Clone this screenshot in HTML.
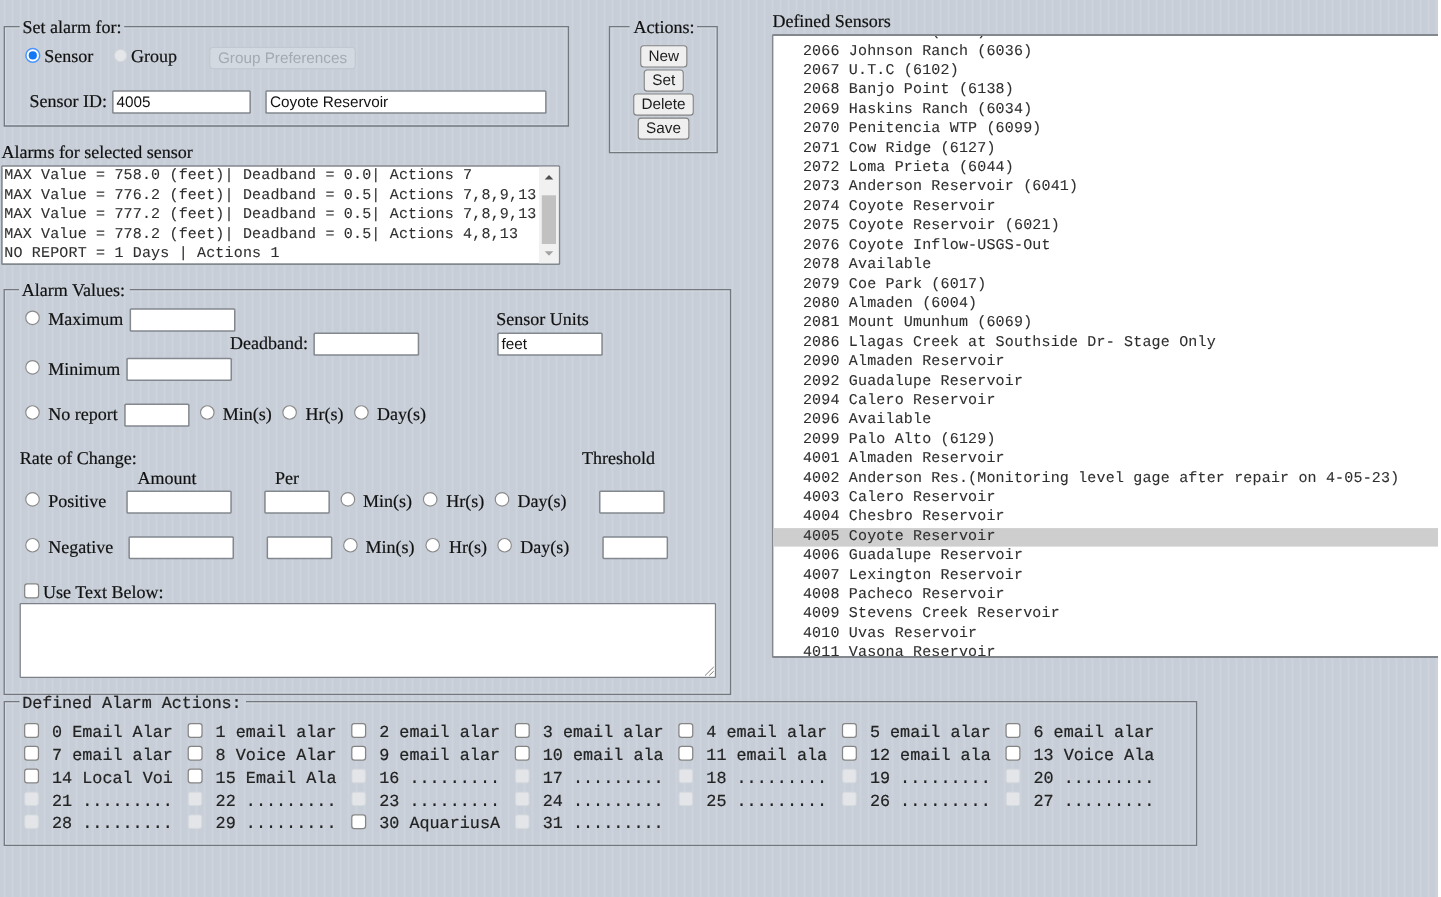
<!DOCTYPE html>
<html lang="en"><head><meta charset="utf-8"><title>Alarm Setup</title>
<style>
html,body{margin:0;padding:0}
body{width:1441px;height:897px;overflow:hidden;position:relative;
 background-color:#c7ced7;
 background-image:repeating-linear-gradient(90deg,#c7ced7 0px,#c7ced7 3px,#ccd3dc 4px,#ccd3dc 5px,#c7ced7 6px,#c7ced7 8px);}
#g{position:absolute;left:0;top:0}
.t{position:absolute;white-space:pre;line-height:1;color:#111;text-rendering:geometricPrecision}
.serif{font-family:"Liberation Serif",serif;font-size:18px;-webkit-text-stroke:0.2px #111}
.sans{font-family:"Liberation Sans",sans-serif;font-size:15.3px}
.mono{font-family:"Liberation Mono",monospace;font-size:15px;letter-spacing:0.175px;-webkit-text-stroke:0.1px #2e2e2e}
.monob{font-family:"Liberation Mono",monospace;font-size:16.8px;-webkit-text-stroke:0.2px #222}
#tx{position:absolute;left:0;top:0;width:1441px;height:897px;will-change:transform}
#lb{position:absolute;overflow:hidden;will-change:transform}
#strip{position:absolute;left:1438px;top:0;width:3px;height:897px;background:#fff}
</style></head>
<body>
<svg id="g" width="1441" height="897" viewBox="0 0 1441 897">
<path d="M19.60 27.95H5.55V124.75H567.15V27.95H124.20" fill="none" stroke="#fff" stroke-opacity="0.22" stroke-width="1.2"/>
<path d="M19.60 26.70H4.30V126.00H568.40V26.70H124.20" fill="none" stroke="#747980" stroke-width="1.3"/>
<circle cx="32.80" cy="55.40" r="6.9" fill="#fff" stroke="#4a95fb" stroke-width="1.5"/>
<circle cx="32.80" cy="55.40" r="4.1" fill="#1177f6"/>
<circle cx="120.60" cy="55.60" r="6.15" fill="#e4e6e9" stroke="#d3d7dc" stroke-width="1"/>
<rect x="209.90" y="47.40" width="145.30" height="21.30" rx="3" fill="#d3d9e0" stroke="#c0c6ce" stroke-width="1"/>
<rect x="112.10" y="90.30" width="138.80" height="23.50" rx="1.6" fill="#83888e"/>
<rect x="113.60" y="91.80" width="135.80" height="20.50" rx="0.55" fill="#fff"/>
<rect x="265.30" y="90.30" width="281.30" height="23.50" rx="1.6" fill="#83888e"/>
<rect x="266.80" y="91.80" width="278.30" height="20.50" rx="0.55" fill="#fff"/>
<path d="M629.60 27.95H610.75V151.35H715.95V27.95H697.00" fill="none" stroke="#fff" stroke-opacity="0.22" stroke-width="1.2"/>
<path d="M629.60 26.70H609.50V152.60H717.20V26.70H697.00" fill="none" stroke="#747980" stroke-width="1.3"/>
<rect x="640.75" y="45.75" width="46.10" height="21.30" rx="3" fill="#efefef" stroke="#828282" stroke-width="1.1"/>
<rect x="644.25" y="70.05" width="39.00" height="21.10" rx="3" fill="#efefef" stroke="#828282" stroke-width="1.1"/>
<rect x="633.75" y="93.95" width="59.50" height="21.20" rx="3" fill="#efefef" stroke="#828282" stroke-width="1.1"/>
<rect x="638.25" y="118.15" width="50.60" height="21.00" rx="3" fill="#efefef" stroke="#828282" stroke-width="1.1"/>
<rect x="1.10" y="165.20" width="559.10" height="99.70" rx="1.5" fill="#83888e"/>
<rect x="2.70" y="166.80" width="555.90" height="96.50" rx="0.38" fill="#fff"/>
<rect x="538.9" y="166.8" width="19.7" height="96.5" fill="#f1f1f1"/>
<rect x="541.8" y="195.3" width="14.2" height="48.7" fill="#c1c1c1"/>
<path d="M544.7 179.4L549.0 174.9L553.3 179.4Z" fill="#505050"/>
<path d="M544.7 251.2L549.0 255.7L553.3 251.2Z" fill="#a3a3a3"/>
<path d="M19.00 290.85H5.45V693.05H729.25V290.85H129.80" fill="none" stroke="#fff" stroke-opacity="0.22" stroke-width="1.2"/>
<path d="M19.00 289.60H4.20V694.30H730.50V289.60H129.80" fill="none" stroke="#747980" stroke-width="1.3"/>
<circle cx="32.50" cy="317.80" r="6.75" fill="#fff" stroke="#8a8a8a" stroke-width="1.15"/>
<rect x="129.60" y="308.20" width="105.90" height="23.60" rx="1.6" fill="#83888e"/>
<rect x="131.10" y="309.70" width="102.90" height="20.60" rx="0.55" fill="#fff"/>
<rect x="313.40" y="332.60" width="105.80" height="23.20" rx="1.6" fill="#83888e"/>
<rect x="314.90" y="334.10" width="102.80" height="20.20" rx="0.55" fill="#fff"/>
<rect x="497.20" y="332.60" width="105.60" height="23.20" rx="1.6" fill="#83888e"/>
<rect x="498.70" y="334.10" width="102.60" height="20.20" rx="0.55" fill="#fff"/>
<circle cx="32.50" cy="367.30" r="6.75" fill="#fff" stroke="#8a8a8a" stroke-width="1.15"/>
<rect x="126.30" y="357.70" width="105.70" height="23.30" rx="1.6" fill="#83888e"/>
<rect x="127.80" y="359.20" width="102.70" height="20.30" rx="0.55" fill="#fff"/>
<circle cx="32.50" cy="412.50" r="6.75" fill="#fff" stroke="#8a8a8a" stroke-width="1.15"/>
<rect x="124.20" y="403.60" width="65.40" height="23.20" rx="1.6" fill="#83888e"/>
<rect x="125.70" y="405.10" width="62.40" height="20.20" rx="0.55" fill="#fff"/>
<circle cx="207.30" cy="412.50" r="6.75" fill="#fff" stroke="#8a8a8a" stroke-width="1.15"/>
<circle cx="289.60" cy="412.50" r="6.75" fill="#fff" stroke="#8a8a8a" stroke-width="1.15"/>
<circle cx="361.40" cy="412.50" r="6.75" fill="#fff" stroke="#8a8a8a" stroke-width="1.15"/>
<circle cx="32.50" cy="499.40" r="6.75" fill="#fff" stroke="#8a8a8a" stroke-width="1.15"/>
<rect x="126.30" y="490.50" width="105.50" height="23.20" rx="1.6" fill="#83888e"/>
<rect x="127.80" y="492.00" width="102.50" height="20.20" rx="0.55" fill="#fff"/>
<rect x="264.20" y="490.50" width="65.70" height="23.20" rx="1.6" fill="#83888e"/>
<rect x="265.70" y="492.00" width="62.70" height="20.20" rx="0.55" fill="#fff"/>
<circle cx="347.90" cy="499.40" r="6.75" fill="#fff" stroke="#8a8a8a" stroke-width="1.15"/>
<circle cx="430.20" cy="499.40" r="6.75" fill="#fff" stroke="#8a8a8a" stroke-width="1.15"/>
<circle cx="502.00" cy="499.40" r="6.75" fill="#fff" stroke="#8a8a8a" stroke-width="1.15"/>
<rect x="599.00" y="490.50" width="65.80" height="23.20" rx="1.6" fill="#83888e"/>
<rect x="600.50" y="492.00" width="62.80" height="20.20" rx="0.55" fill="#fff"/>
<circle cx="32.50" cy="545.25" r="6.75" fill="#fff" stroke="#8a8a8a" stroke-width="1.15"/>
<rect x="128.40" y="536.30" width="105.60" height="22.90" rx="1.6" fill="#83888e"/>
<rect x="129.90" y="537.80" width="102.60" height="19.90" rx="0.55" fill="#fff"/>
<rect x="266.60" y="536.30" width="65.80" height="22.90" rx="1.6" fill="#83888e"/>
<rect x="268.10" y="537.80" width="62.80" height="19.90" rx="0.55" fill="#fff"/>
<circle cx="350.40" cy="545.25" r="6.75" fill="#fff" stroke="#8a8a8a" stroke-width="1.15"/>
<circle cx="432.70" cy="545.25" r="6.75" fill="#fff" stroke="#8a8a8a" stroke-width="1.15"/>
<circle cx="504.60" cy="545.25" r="6.75" fill="#fff" stroke="#8a8a8a" stroke-width="1.15"/>
<rect x="602.30" y="536.30" width="65.80" height="22.90" rx="1.6" fill="#83888e"/>
<rect x="603.80" y="537.80" width="62.80" height="19.90" rx="0.55" fill="#fff"/>
<rect x="24.67" y="583.85" width="13.90" height="13.90" rx="2.6" fill="#fff" stroke="#858585" stroke-width="1.25"/>
<rect x="19.60" y="603.00" width="696.50" height="75.00" rx="1.2" fill="#7d8187"/>
<rect x="20.85" y="604.25" width="694.00" height="72.50" rx="0.32" fill="#fff"/>
<path d="M705.0 675.6L713.8 666.9M709.3 675.5L713.8 671.1" stroke="#808080" stroke-width="1" fill="none"/>
<path d="M19.50 702.85H5.55V844.15H1195.30V702.85H246.00" fill="none" stroke="#fff" stroke-opacity="0.22" stroke-width="1.2"/>
<path d="M19.50 701.60H4.30V845.40H1196.55V701.60H246.00" fill="none" stroke="#747980" stroke-width="1.3"/>
<rect x="24.65" y="723.50" width="13.80" height="13.80" rx="2.6" fill="#fff" stroke="#858585" stroke-width="1.25"/>
<rect x="188.22" y="723.50" width="13.80" height="13.80" rx="2.6" fill="#fff" stroke="#858585" stroke-width="1.25"/>
<rect x="351.79" y="723.50" width="13.80" height="13.80" rx="2.6" fill="#fff" stroke="#858585" stroke-width="1.25"/>
<rect x="515.36" y="723.50" width="13.80" height="13.80" rx="2.6" fill="#fff" stroke="#858585" stroke-width="1.25"/>
<rect x="678.93" y="723.50" width="13.80" height="13.80" rx="2.6" fill="#fff" stroke="#858585" stroke-width="1.25"/>
<rect x="842.50" y="723.50" width="13.80" height="13.80" rx="2.6" fill="#fff" stroke="#858585" stroke-width="1.25"/>
<rect x="1006.07" y="723.50" width="13.80" height="13.80" rx="2.6" fill="#fff" stroke="#858585" stroke-width="1.25"/>
<rect x="24.65" y="746.32" width="13.80" height="13.80" rx="2.6" fill="#fff" stroke="#858585" stroke-width="1.25"/>
<rect x="188.22" y="746.32" width="13.80" height="13.80" rx="2.6" fill="#fff" stroke="#858585" stroke-width="1.25"/>
<rect x="351.79" y="746.32" width="13.80" height="13.80" rx="2.6" fill="#fff" stroke="#858585" stroke-width="1.25"/>
<rect x="515.36" y="746.32" width="13.80" height="13.80" rx="2.6" fill="#fff" stroke="#858585" stroke-width="1.25"/>
<rect x="678.93" y="746.32" width="13.80" height="13.80" rx="2.6" fill="#fff" stroke="#858585" stroke-width="1.25"/>
<rect x="842.50" y="746.32" width="13.80" height="13.80" rx="2.6" fill="#fff" stroke="#858585" stroke-width="1.25"/>
<rect x="1006.07" y="746.32" width="13.80" height="13.80" rx="2.6" fill="#fff" stroke="#858585" stroke-width="1.25"/>
<rect x="24.65" y="769.14" width="13.80" height="13.80" rx="2.6" fill="#fff" stroke="#858585" stroke-width="1.25"/>
<rect x="188.22" y="769.14" width="13.80" height="13.80" rx="2.6" fill="#fff" stroke="#858585" stroke-width="1.25"/>
<rect x="351.99" y="769.34" width="13.40" height="13.40" rx="2" fill="#e3e5e8" stroke="#d6dadf" stroke-width="1"/>
<rect x="515.56" y="769.34" width="13.40" height="13.40" rx="2" fill="#e3e5e8" stroke="#d6dadf" stroke-width="1"/>
<rect x="679.13" y="769.34" width="13.40" height="13.40" rx="2" fill="#e3e5e8" stroke="#d6dadf" stroke-width="1"/>
<rect x="842.70" y="769.34" width="13.40" height="13.40" rx="2" fill="#e3e5e8" stroke="#d6dadf" stroke-width="1"/>
<rect x="1006.27" y="769.34" width="13.40" height="13.40" rx="2" fill="#e3e5e8" stroke="#d6dadf" stroke-width="1"/>
<rect x="24.85" y="792.16" width="13.40" height="13.40" rx="2" fill="#e3e5e8" stroke="#d6dadf" stroke-width="1"/>
<rect x="188.42" y="792.16" width="13.40" height="13.40" rx="2" fill="#e3e5e8" stroke="#d6dadf" stroke-width="1"/>
<rect x="351.99" y="792.16" width="13.40" height="13.40" rx="2" fill="#e3e5e8" stroke="#d6dadf" stroke-width="1"/>
<rect x="515.56" y="792.16" width="13.40" height="13.40" rx="2" fill="#e3e5e8" stroke="#d6dadf" stroke-width="1"/>
<rect x="679.13" y="792.16" width="13.40" height="13.40" rx="2" fill="#e3e5e8" stroke="#d6dadf" stroke-width="1"/>
<rect x="842.70" y="792.16" width="13.40" height="13.40" rx="2" fill="#e3e5e8" stroke="#d6dadf" stroke-width="1"/>
<rect x="1006.27" y="792.16" width="13.40" height="13.40" rx="2" fill="#e3e5e8" stroke="#d6dadf" stroke-width="1"/>
<rect x="24.85" y="814.98" width="13.40" height="13.40" rx="2" fill="#e3e5e8" stroke="#d6dadf" stroke-width="1"/>
<rect x="188.42" y="814.98" width="13.40" height="13.40" rx="2" fill="#e3e5e8" stroke="#d6dadf" stroke-width="1"/>
<rect x="351.79" y="814.78" width="13.80" height="13.80" rx="2.6" fill="#fff" stroke="#858585" stroke-width="1.25"/>
<rect x="515.56" y="814.98" width="13.40" height="13.40" rx="2" fill="#e3e5e8" stroke="#d6dadf" stroke-width="1"/>
<rect x="771.9" y="34.0" width="700" height="623.9" rx="1.5" fill="#83888e"/>
<rect x="773.4" y="35.9" width="700" height="620.1" rx="0.5" fill="#fff"/>
<rect x="773.4" y="528.10" width="700" height="18.5" fill="#cecece"/>
</svg>
<div id="tx">
<span class="t serif" style="left:22.60px;top:18.00px;">Set alarm for:</span>
<span class="t serif" style="left:44.30px;top:47.00px;">Sensor</span>
<span class="t serif" style="left:131.00px;top:47.00px;">Group</span>
<span class="t sans" style="left:209.40px;width:146.30px;text-align:center;top:51px;color:#a3aab3">Group Preferences</span>
<span class="t serif" style="left:29.60px;top:92.00px;">Sensor ID:</span>
<span class="t sans" style="left:116.60px;top:95.00px;">4005</span>
<span class="t sans" style="left:270.00px;top:95.00px;">Coyote Reservoir</span>
<span class="t serif" style="left:633.40px;top:18.00px;">Actions:</span>
<span class="t sans" style="left:640.20px;width:47.20px;text-align:center;top:49px;color:#1c1c1c">New</span>
<span class="t sans" style="left:643.70px;width:40.10px;text-align:center;top:73px;color:#1c1c1c">Set</span>
<span class="t sans" style="left:633.20px;width:60.60px;text-align:center;top:97px;color:#1c1c1c">Delete</span>
<span class="t sans" style="left:637.70px;width:51.70px;text-align:center;top:121px;color:#1c1c1c">Save</span>
<span class="t serif" style="left:1.40px;top:143.00px;">Alarms for selected sensor</span>
<span class="t mono" style="left:4.30px;top:168.00px;color:#2e2e2e;">MAX Value = 758.0 (feet)| Deadband = 0.0| Actions 7</span>
<span class="t mono" style="left:4.30px;top:188.00px;color:#2e2e2e;">MAX Value = 776.2 (feet)| Deadband = 0.5| Actions 7,8,9,13</span>
<span class="t mono" style="left:4.30px;top:207.00px;color:#2e2e2e;">MAX Value = 777.2 (feet)| Deadband = 0.5| Actions 7,8,9,13</span>
<span class="t mono" style="left:4.30px;top:227.00px;color:#2e2e2e;">MAX Value = 778.2 (feet)| Deadband = 0.5| Actions 4,8,13</span>
<span class="t mono" style="left:4.30px;top:246.00px;color:#2e2e2e;">NO REPORT = 1 Days | Actions 1</span>
<span class="t serif" style="left:21.80px;top:281.00px;">Alarm Values:</span>
<span class="t serif" style="left:48.30px;top:310.00px;">Maximum</span>
<span class="t serif" style="left:230.00px;top:334.00px;">Deadband:</span>
<span class="t serif" style="left:496.20px;top:310.00px;">Sensor Units</span>
<span class="t sans" style="left:501.60px;top:337.00px;">feet</span>
<span class="t serif" style="left:48.30px;top:360.00px;">Minimum</span>
<span class="t serif" style="left:48.30px;top:405.00px;">No report</span>
<span class="t serif" style="left:222.80px;top:405.00px;">Min(s)</span>
<span class="t serif" style="left:305.50px;top:405.00px;">Hr(s)</span>
<span class="t serif" style="left:377.00px;top:405.00px;">Day(s)</span>
<span class="t serif" style="left:19.80px;top:449.00px;">Rate of Change:</span>
<span class="t serif" style="left:582.00px;top:449.00px;">Threshold</span>
<span class="t serif" style="left:137.40px;top:469.00px;">Amount</span>
<span class="t serif" style="left:274.90px;top:469.00px;">Per</span>
<span class="t serif" style="left:48.30px;top:492.00px;">Positive</span>
<span class="t serif" style="left:363.10px;top:492.00px;">Min(s)</span>
<span class="t serif" style="left:446.30px;top:492.00px;">Hr(s)</span>
<span class="t serif" style="left:517.60px;top:492.00px;">Day(s)</span>
<span class="t serif" style="left:48.30px;top:538.00px;">Negative</span>
<span class="t serif" style="left:365.60px;top:538.00px;">Min(s)</span>
<span class="t serif" style="left:448.90px;top:538.00px;">Hr(s)</span>
<span class="t serif" style="left:520.20px;top:538.00px;">Day(s)</span>
<span class="t serif" style="left:43.10px;top:583.00px;">Use Text Below:</span>
<span class="t monob" style="left:22.20px;top:697.00px;color:#222;letter-spacing:-0.1px;">Defined Alarm Actions:</span>
<span class="t monob" style="left:52.05px;top:726.00px;color:#222;">0 Email Alar</span>
<span class="t monob" style="left:215.62px;top:726.00px;color:#222;">1 email alar</span>
<span class="t monob" style="left:379.19px;top:726.00px;color:#222;">2 email alar</span>
<span class="t monob" style="left:542.76px;top:726.00px;color:#222;">3 email alar</span>
<span class="t monob" style="left:706.33px;top:726.00px;color:#222;">4 email alar</span>
<span class="t monob" style="left:869.90px;top:726.00px;color:#222;">5 email alar</span>
<span class="t monob" style="left:1033.47px;top:726.00px;color:#222;">6 email alar</span>
<span class="t monob" style="left:52.05px;top:749.00px;color:#222;">7 email alar</span>
<span class="t monob" style="left:215.62px;top:749.00px;color:#222;">8 Voice Alar</span>
<span class="t monob" style="left:379.19px;top:749.00px;color:#222;">9 email alar</span>
<span class="t monob" style="left:542.76px;top:749.00px;color:#222;">10 email ala</span>
<span class="t monob" style="left:706.33px;top:749.00px;color:#222;">11 email ala</span>
<span class="t monob" style="left:869.90px;top:749.00px;color:#222;">12 email ala</span>
<span class="t monob" style="left:1033.47px;top:749.00px;color:#222;">13 Voice Ala</span>
<span class="t monob" style="left:52.05px;top:772.00px;color:#222;">14 Local Voi</span>
<span class="t monob" style="left:215.62px;top:772.00px;color:#222;">15 Email Ala</span>
<span class="t monob" style="left:379.19px;top:772.00px;color:#222;">16 .........</span>
<span class="t monob" style="left:542.76px;top:772.00px;color:#222;">17 .........</span>
<span class="t monob" style="left:706.33px;top:772.00px;color:#222;">18 .........</span>
<span class="t monob" style="left:869.90px;top:772.00px;color:#222;">19 .........</span>
<span class="t monob" style="left:1033.47px;top:772.00px;color:#222;">20 .........</span>
<span class="t monob" style="left:52.05px;top:795.00px;color:#222;">21 .........</span>
<span class="t monob" style="left:215.62px;top:795.00px;color:#222;">22 .........</span>
<span class="t monob" style="left:379.19px;top:795.00px;color:#222;">23 .........</span>
<span class="t monob" style="left:542.76px;top:795.00px;color:#222;">24 .........</span>
<span class="t monob" style="left:706.33px;top:795.00px;color:#222;">25 .........</span>
<span class="t monob" style="left:869.90px;top:795.00px;color:#222;">26 .........</span>
<span class="t monob" style="left:1033.47px;top:795.00px;color:#222;">27 .........</span>
<span class="t monob" style="left:52.05px;top:817.00px;color:#222;">28 .........</span>
<span class="t monob" style="left:215.62px;top:817.00px;color:#222;">29 .........</span>
<span class="t monob" style="left:379.19px;top:817.00px;color:#222;">30 AquariusA</span>
<span class="t monob" style="left:542.76px;top:817.00px;color:#222;">31 .........</span>
<span class="t serif" style="left:772.40px;top:12.00px;">Defined Sensors</span>
</div>
<div id="lb" style="left:773px;top:36px;width:665px;height:620px">
<span class="t mono" style="left:29.90px;top:-12px;color:#2e2e2e">2065 Calabaza (6018)</span>
<span class="t mono" style="left:29.90px;top:8px;color:#2e2e2e">2066 Johnson Ranch (6036)</span>
<span class="t mono" style="left:29.90px;top:27px;color:#2e2e2e">2067 U.T.C (6102)</span>
<span class="t mono" style="left:29.90px;top:46px;color:#2e2e2e">2068 Banjo Point (6138)</span>
<span class="t mono" style="left:29.90px;top:66px;color:#2e2e2e">2069 Haskins Ranch (6034)</span>
<span class="t mono" style="left:29.90px;top:85px;color:#2e2e2e">2070 Penitencia WTP (6099)</span>
<span class="t mono" style="left:29.90px;top:105px;color:#2e2e2e">2071 Cow Ridge (6127)</span>
<span class="t mono" style="left:29.90px;top:124px;color:#2e2e2e">2072 Loma Prieta (6044)</span>
<span class="t mono" style="left:29.90px;top:143px;color:#2e2e2e">2073 Anderson Reservoir (6041)</span>
<span class="t mono" style="left:29.90px;top:163px;color:#2e2e2e">2074 Coyote Reservoir</span>
<span class="t mono" style="left:29.90px;top:182px;color:#2e2e2e">2075 Coyote Reservoir (6021)</span>
<span class="t mono" style="left:29.90px;top:202px;color:#2e2e2e">2076 Coyote Inflow-USGS-Out</span>
<span class="t mono" style="left:29.90px;top:221px;color:#2e2e2e">2078 Available</span>
<span class="t mono" style="left:29.90px;top:241px;color:#2e2e2e">2079 Coe Park (6017)</span>
<span class="t mono" style="left:29.90px;top:260px;color:#2e2e2e">2080 Almaden (6004)</span>
<span class="t mono" style="left:29.90px;top:279px;color:#2e2e2e">2081 Mount Umunhum (6069)</span>
<span class="t mono" style="left:29.90px;top:299px;color:#2e2e2e">2086 Llagas Creek at Southside Dr- Stage Only</span>
<span class="t mono" style="left:29.90px;top:318px;color:#2e2e2e">2090 Almaden Reservoir</span>
<span class="t mono" style="left:29.90px;top:338px;color:#2e2e2e">2092 Guadalupe Reservoir</span>
<span class="t mono" style="left:29.90px;top:357px;color:#2e2e2e">2094 Calero Reservoir</span>
<span class="t mono" style="left:29.90px;top:376px;color:#2e2e2e">2096 Available</span>
<span class="t mono" style="left:29.90px;top:396px;color:#2e2e2e">2099 Palo Alto (6129)</span>
<span class="t mono" style="left:29.90px;top:415px;color:#2e2e2e">4001 Almaden Reservoir</span>
<span class="t mono" style="left:29.90px;top:435px;color:#2e2e2e">4002 Anderson Res.(Monitoring level gage after repair on 4-05-23)</span>
<span class="t mono" style="left:29.90px;top:454px;color:#2e2e2e">4003 Calero Reservoir</span>
<span class="t mono" style="left:29.90px;top:473px;color:#2e2e2e">4004 Chesbro Reservoir</span>
<span class="t mono" style="left:29.90px;top:493px;color:#2e2e2e">4005 Coyote Reservoir</span>
<span class="t mono" style="left:29.90px;top:512px;color:#2e2e2e">4006 Guadalupe Reservoir</span>
<span class="t mono" style="left:29.90px;top:532px;color:#2e2e2e">4007 Lexington Reservoir</span>
<span class="t mono" style="left:29.90px;top:551px;color:#2e2e2e">4008 Pacheco Reservoir</span>
<span class="t mono" style="left:29.90px;top:570px;color:#2e2e2e">4009 Stevens Creek Reservoir</span>
<span class="t mono" style="left:29.90px;top:590px;color:#2e2e2e">4010 Uvas Reservoir</span>
<span class="t mono" style="left:29.90px;top:609px;color:#2e2e2e">4011 Vasona Reservoir</span>
</div>
<div id="strip"></div>
</body></html>
